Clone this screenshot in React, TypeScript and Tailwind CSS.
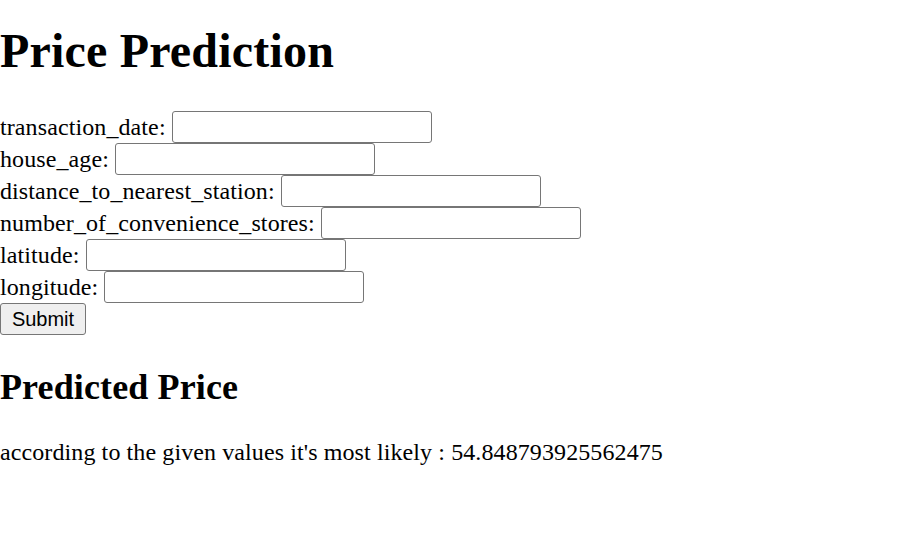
const fields = [
  'transaction_date',
  'house_age',
  'distance_to_nearest_station',
  'number_of_convenience_stores',
  'latitude',
  'longitude',
]

export default function App() {
  return (
    <div className="min-h-[534px] bg-white text-black font-['Liberation_Serif','Times_New_Roman',serif]">
      <h1 className="pt-[23px] text-[48px] leading-[55px] font-bold tracking-[0.19px]">Price Prediction</h1>
      <form className="mt-[33px] flex flex-col" onSubmit={(e) => e.preventDefault()}>
        {fields.map((name) => (
          <div key={name} className="flex h-8 items-center">
            <label htmlFor={name} className="text-[24px] leading-8 tracking-[0.1px]">
              {name}:
            </label>
            <input
              id={name}
              type="text"
              className="ml-[6px] h-8 w-[260px] rounded-[3px] border border-[#767676] bg-white px-[3px] text-[20px] font-['Liberation_Sans',Arial,sans-serif]"
            />
          </div>
        ))}
        <div className="flex h-8">
          <button
            type="submit"
            className="h-8 w-[86px] rounded-[3px] border border-[#767676] bg-[#efefef] text-[20px] text-black font-['Liberation_Sans',Arial,sans-serif]"
          >
            Submit
          </button>
        </div>
      </form>
      <h2 className="mt-[32px] text-[36px] leading-[41px] font-bold tracking-[0.13px]">Predicted Price</h2>
      <p className="mt-[30px] text-[24px] leading-[28px] tracking-[0.1px]">
        according to the given values it's most likely : 54.848793925562475
      </p>
    </div>
  )
}
